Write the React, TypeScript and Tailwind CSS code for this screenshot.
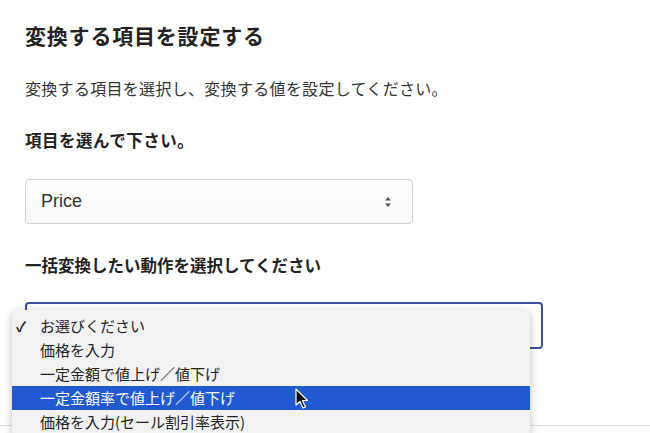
import React from "react";

const options = [
    "お選びください",
    "価格を入力",
    "一定金額で値上げ／値下げ",
    "一定金額率で値上げ／値下げ",
    "価格を入力(セール割引率表示)",
];

const App = () => {
    const selected = 0;
    const hovered = 3;

    return (
        <div
            className="h-[433px] w-[650px] overflow-hidden bg-white text-[#222]"
            style={{ fontFamily: '"Noto Sans CJK JP", "Noto Sans", sans-serif' }}
        >
            <div className="px-[25px] pt-[22px]">
                <h2 className="text-[21px] font-bold leading-[26px] tracking-[0.8px]">変換する項目を設定する</h2>
                <p className="mt-[29px] text-[16px] leading-[22px] tracking-[0.3px] text-[#333]">
                    変換する項目を選択し、変換する値を設定してください。
                </p>
                <h3 className="mt-[30px] text-[16.5px] font-bold leading-[22px] tracking-[0.5px]">項目を選んで下さい。</h3>

                {/* Field select */}
                <div className="mt-[28px] flex h-[45px] w-[388px] items-center justify-between rounded-[4px] border border-[#cfcfd4] bg-gradient-to-b from-white to-[#f9f9fa] pl-[15px] pr-[20px]">
                    <span className="text-[18px] text-[#333]" style={{ fontFamily: '"Liberation Sans", sans-serif' }}>
                        Price
                    </span>
                    <svg width="8" height="12" viewBox="0 0 8 12" className="text-[#555]">
                        <path d="M4 1 L7 4.5 H1 Z" fill="currentColor" />
                        <path d="M4 11 L7 7.5 H1 Z" fill="currentColor" />
                    </svg>
                </div>

                <h3 className="mt-[30px] text-[16.5px] font-bold leading-[22px]">一括変換したい動作を選択してください</h3>

                {/* Action select, opened */}
                <div className="relative mt-[26px] h-[47px] w-[518px] rounded-[4px] border-2 border-[#3d4e9e] bg-white">
                    <div className="absolute left-[-15px] top-[6px] z-10 w-[518px] rounded-[6px] bg-[#f2f2f2] pt-[4px] pb-[4px] shadow-[0_2px_8px_rgba(0,0,0,0.25)]">
                        {options.map((opt, i) => (
                            <div
                                key={opt}
                                className={`flex h-[24px] items-center text-[15px] leading-[24px] ${
                                    i === hovered ? "bg-[#2159d1] text-white" : "text-[#222]"
                                }`}
                            >
                                <span className="w-[28px] pl-[4px] text-[14px] font-bold">{i === selected ? "✓" : ""}</span>
                                <span>{opt}</span>
                            </div>
                        ))}

                        {/* Mouse pointer */}
                        <svg
                            width="14"
                            height="22"
                            viewBox="0 0 14 22"
                            className="absolute left-[283px] top-[78px]"
                        >
                            <path
                                d="M1 1 L1 17 L5 13.5 L8 20 L10.5 19 L7.5 12.5 L12.5 12.5 Z"
                                fill="#111"
                                stroke="#fff"
                                strokeWidth="1.2"
                                strokeLinejoin="round"
                            />
                        </svg>
                    </div>
                </div>
            </div>

            <div className="mt-[76px] border-t border-[#dcdcdc]" />
        </div>
    );
};

export default App;
